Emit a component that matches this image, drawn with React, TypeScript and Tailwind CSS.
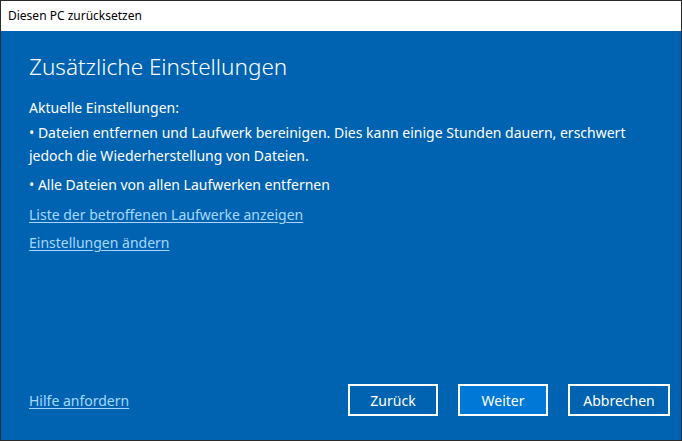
export default function App() {
  const font = { fontFamily: '"Segoe UI", "Noto Sans", "Open Sans", sans-serif' };
  return (
    <div className="w-[682px] h-[441px] border border-[#2b2b2b] flex flex-col bg-[#0063b1]" style={font}>
      {/* title bar */}
      <div className="h-[30px] bg-white flex items-center pl-[7px] text-[12px] text-black">
        Diesen PC zurücksetzen
      </div>

      {/* content */}
      <div className="flex-1 flex flex-col px-[28px] pt-[20px] pb-[24px] text-white">
        <h1 className="text-[22.5px] font-light leading-[32px]">Zusätzliche Einstellungen</h1>

        <div className="mt-[13px] text-[14px] leading-[23px]">
          <p>Aktuelle Einstellungen:</p>
          <p className="mt-[2px]">
            • Dateien entfernen und Laufwerk bereinigen. Dies kann einige Stunden dauern, erschwert
            <br />
            jedoch die Wiederherstellung von Dateien.
          </p>
          <p className="mt-[6px]">• Alle Dateien von allen Laufwerken entfernen</p>
          <p className="mt-[7px]">
            <a className="text-[#a6d8ff] underline underline-offset-2">Liste der betroffenen Laufwerke anzeigen</a>
          </p>
          <p className="mt-[5px]">
            <a className="text-[#a6d8ff] underline underline-offset-2">Einstellungen ändern</a>
          </p>
        </div>

        <div className="mt-auto flex items-center">
          <a className="text-[14px] text-[#a6d8ff] underline underline-offset-2">Hilfe anfordern</a>
          <div className="ml-auto flex gap-[20px] -mr-[17px]">
            <button className="w-[90px] h-[32px] border-2 border-white text-[14px]">Zurück</button>
            <button className="w-[90px] h-[32px] border-2 border-white bg-[#0078d7] text-[14px]">Weiter</button>
            <button className="w-[102px] h-[32px] border-2 border-white text-[14px]">Abbrechen</button>
          </div>
        </div>
      </div>
    </div>
  );
}
